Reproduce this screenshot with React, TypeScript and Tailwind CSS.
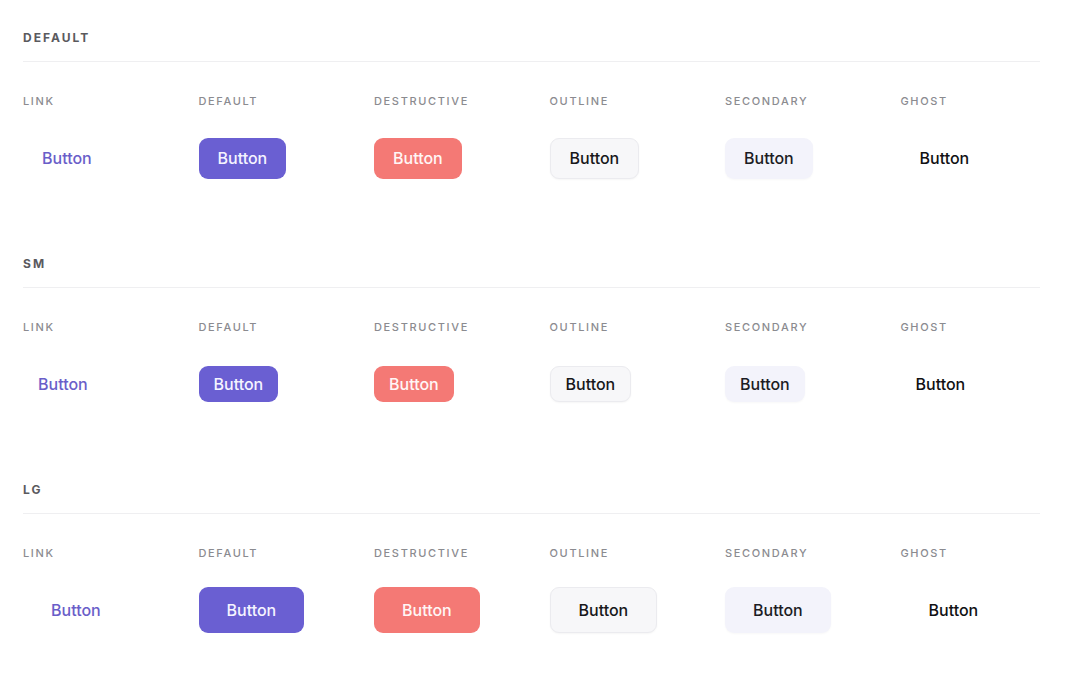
import React from 'react';

type Variant = 'link' | 'default' | 'destructive' | 'outline' | 'secondary' | 'ghost';
type Size = 'default' | 'sm' | 'lg';

const variants: Variant[] = ['link', 'default', 'destructive', 'outline', 'secondary', 'ghost'];

const variantClass: Record<Variant, string> = {
  link: 'text-[#6a5ec9]',
  default: 'bg-[#6a5fd2] text-[#f5f4ff]',
  destructive: 'bg-[#f47975] text-[#fff6f5]',
  outline: 'bg-[#f7f7f9] text-[#18181b] border border-[#ebebef] shadow-[0_1px_2px_rgba(0,0,0,0.04)]',
  secondary: 'bg-[#f3f3fb] text-[#1c1c24] shadow-[0_1px_2px_rgba(0,0,0,0.03)]',
  ghost: 'text-[#111114]',
};

const sizeClass: Record<Size, string> = {
  default: 'h-[41px] px-[19px]',
  sm: 'h-[36px] px-[15px]',
  lg: 'h-[46px] px-[28px]',
};

function Button({ variant, size }: { variant: Variant; size: Size }) {
  return (
    <button
      className={`inline-flex items-center justify-center rounded-[9px] text-[16px] font-medium leading-none ${sizeClass[size]} ${variantClass[variant]}`}
    >
      Button
    </button>
  );
}

function Section({ title, size }: { title: string; size: Size }) {
  return (
    <section className="mb-[68px]">
      <h2 className="border-b border-[#efeff1] pb-[15px] text-[12px] font-bold leading-[16px] tracking-[0.17em] text-[#5a5a5e]">
        {title}
      </h2>
      <div className="mt-[32px] grid grid-cols-6 gap-x-[36px]">
        {variants.map((v) => (
          <div key={v} className="flex flex-col">
            <span className="text-[11px] font-medium leading-[14px] tracking-[0.15em] text-[#8b8b90]">
              {v.toUpperCase()}
            </span>
            <div className="mt-[20px] flex h-[60px] items-center">
              <Button variant={v} size={size} />
            </div>
          </div>
        ))}
      </div>
    </section>
  );
}

export default function App() {
  return (
    <div className="min-h-screen bg-white pl-[23px] pr-[26px] pt-[30px] font-['Inter','Noto_Sans',sans-serif]">
      <Section title="DEFAULT" size="default" />
      <Section title="SM" size="sm" />
      <Section title="LG" size="lg" />
    </div>
  );
}
